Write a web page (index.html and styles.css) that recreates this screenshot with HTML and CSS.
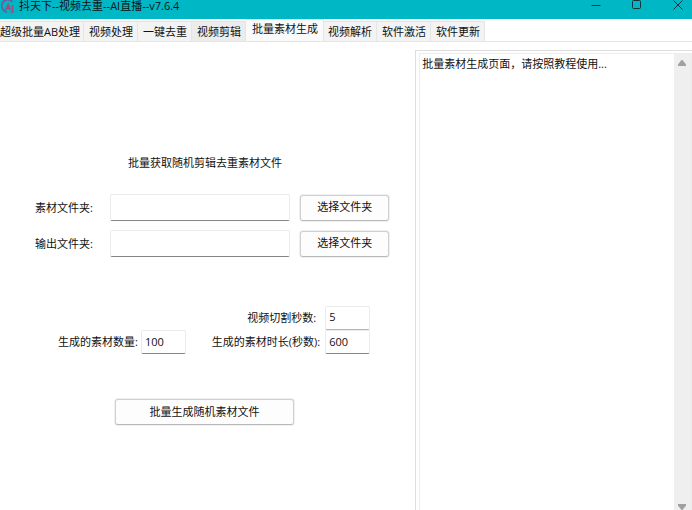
FILE: index.html
```html
<!DOCTYPE html>
<html lang="zh-CN">
<head>
<meta charset="utf-8">
<meta name="viewport" content="width=device-width, initial-scale=1">
<title>抖天下--视频去重--AI直播--v7.6.4</title>
<link rel="stylesheet" href="styles.css">
</head>
<body>
<header class="titlebar">
  <svg class="logo" width="16" height="16" viewBox="0 0 16 16" fill="none" stroke="#7a519c" stroke-width="1.5" aria-hidden="true">
    <path d="M12.500 4C10 .5 4 1 2.200 5.200C.8 9 3 13.500 7 14" />
    <path d="M5.500 12L8.200 6.500L10.500 12M6.500 10.500H10M12.500 7V13M10.500 14H14" stroke="#a8467f" />
  </svg>
  <h1 class="title">抖天下--视频去重--AI直播--v7.6.4</h1>
  <div class="window-controls">
    <button type="button" class="window-button" aria-label="最小化"><svg width="12" height="12" viewBox="0 0 12 12"><path d="M1.500 6.500H10.500" /></svg></button>
    <button type="button" class="window-button" aria-label="最大化"><svg width="12" height="12" viewBox="0 0 12 12"><rect x="1.500" y="1.500" width="8" height="8" rx="1" /></svg></button>
    <button type="button" class="window-button" aria-label="关闭"><svg width="12" height="12" viewBox="0 0 12 12"><path d="M1.500 1.500L10.500 10.500M10.500 1.500L1.500 10.500" /></svg></button>
  </div>
</header>
<nav class="tabs" role="tablist">
  <button type="button" role="tab" class="tab tab-first">超级批量AB处理</button>
  <button type="button" role="tab" class="tab">视频处理</button>
  <button type="button" role="tab" class="tab">一键去重</button>
  <button type="button" role="tab" class="tab tab-hover">视频剪辑</button>
  <button type="button" role="tab" class="tab tab-active" aria-selected="true">批量素材生成</button>
  <button type="button" role="tab" class="tab tab-after">视频解析</button>
  <button type="button" role="tab" class="tab">软件激活</button>
  <button type="button" role="tab" class="tab">软件更新</button>
</nav>
<main class="page">
  <form class="form">
    <h2 class="heading">批量获取随机剪辑去重素材文件</h2>
    <div class="folders">
      <label for="source">素材文件夹:</label>
      <input class="field" id="source" type="text">
      <button type="button" class="button">选择文件夹</button>
      <label for="output">输出文件夹:</label>
      <input class="field" id="output" type="text">
      <button type="button" class="button">选择文件夹</button>
    </div>
    <div class="numbers">
      <label class="cut-label" for="cut">视频切割秒数:</label>
      <input class="field field-cut" id="cut" type="text" value="5">
      <label for="count">生成的素材数量:</label>
      <input class="field" id="count" type="text" value="100">
      <label class="end" for="duration">生成的素材时长(秒数):</label>
      <input class="field" id="duration" type="text" value="600">
    </div>
    <button type="button" class="button generate">批量生成随机素材文件</button>
  </form>
  <section class="log">
    <div class="log-box">
      <p class="log-text">批量素材生成页面，请按照教程使用...</p>
      <div class="scrollbar" aria-hidden="true">
        <svg width="8" height="6" viewBox="0 0 8 6"><path d="M3.500 0H4.500L8 4.500V6H0V4.500Z" /></svg>
        <svg width="8" height="6" viewBox="0 0 8 6"><path d="M0 0H8V1.500L4.500 6H3.500L0 1.500Z" /></svg>
      </div>
    </div>
  </section>
</main>
</body>
</html>
```

FILE: styles.css
```css
* {
  box-sizing: border-box;
}

body {
  display: flex;
  flex-direction: column;
  height: 100vh;
  margin: 0;
  overflow: hidden;
  background: #fff;
  color: #111;
  font: 11px/16px "Open Sans", "Noto Sans CJK SC", sans-serif;
}

button,
input {
  margin: 0;
  color: inherit;
  font: inherit;
}

h1,
h2,
p {
  margin: 0;
  font: inherit;
}

.titlebar {
  display: flex;
  align-items: center;
  flex: none;
  height: 19px;
  padding-bottom: 7px;
  background: #00b7c6;
}

.logo {
  flex: none;
  margin-right: 3px;
}

.title {
  flex: 1;
  line-height: 12px;
  white-space: nowrap;
}

.window-controls {
  display: flex;
}

.window-button {
  display: flex;
  align-items: center;
  justify-content: center;
  width: 41px;
  height: 12px;
  padding: 0 0 2px;
  border: 0;
  background: none;
}

.window-button:last-child {
  width: 28px;
  margin-left: 7px;
}

.window-button svg {
  flex: none;
  fill: none;
  stroke: #16343a;
}

.tabs {
  display: flex;
  align-items: flex-end;
  flex: none;
  height: 23px;
  border-bottom: 1px solid #e5e5e5;
}

.tab {
  height: 20px;
  padding: 0 4px 0 5px;
  border: solid #e5e5e5;
  border-width: 1px 1px 0 0;
  background: #f3f3f3;
  white-space: nowrap;
}

.tab-first {
  padding: 0 3px 0 0;
}

.tab-hover {
  background: #ececec;
}

.tab-active {
  height: 22px;
  padding: 0 5px 3px 6px;
  background: #fafafa;
}

.tab-after {
  padding: 0 4px;
}

.page {
  display: flex;
  flex: 1;
  min-height: 0;
}

.form {
  display: flex;
  flex-direction: column;
  width: 60%;
  padding: 113px 26px 0 35px;
}

.heading {
  margin-bottom: 23px;
  padding-right: 14px;
  text-align: center;
}

.folders {
  display: grid;
  grid-template-columns: 65px 1fr 89px;
  gap: 9px 10px;
  align-items: center;
  margin-bottom: 49px;
}

.field {
  width: 100%;
  min-width: 0;
  height: 27px;
  padding: 0 3px 2px;
  border: 1px solid #ebebeb;
  border-bottom-color: #858585;
  border-radius: 2px;
  outline: 0;
  background: #fff;
}

.button {
  height: 26px;
  padding: 0 0 2px;
  border: 1px solid #d0d0d0;
  border-bottom-color: #b9b9b9;
  border-radius: 3px;
  box-shadow: 0 0 0 1px #f0f0f0;
  background: #fdfdfd;
}

.numbers {
  display: grid;
  grid-template-columns: 78px 45px 1fr 45px;
  column-gap: 5px;
  align-items: center;
  margin: 0 19px 45px 23px;
}

.numbers label {
  white-space: nowrap;
}

.numbers .field {
  height: 24px;
}

.numbers .field-cut {
  padding-bottom: 4px;
  border-bottom-color: #b5b5b5;
}

.cut-label {
  grid-column: 1 / 4;
  padding-right: 4px;
  text-align: right;
}

.end {
  text-align: right;
}

.generate {
  width: 179px;
  margin-left: 80px;
  padding: 0;
}

.log {
  display: flex;
  flex: 1;
  margin-top: 8px;
  padding: 2px 0 0 3px;
  border: solid #dedede;
  border-width: 1px 0 0 1px;
}

.log-box {
  display: flex;
  flex: 1;
  border: solid #ededed;
  border-width: 1px 1px 0;
}

.log-text {
  flex: 1;
  padding: 2px;
}

.scrollbar {
  display: flex;
  flex-direction: column;
  align-items: center;
  justify-content: space-between;
  width: 17px;
  padding: 6px 2px 0 0;
  background: #efefef;
  fill: #a0a0a0;
}
```
